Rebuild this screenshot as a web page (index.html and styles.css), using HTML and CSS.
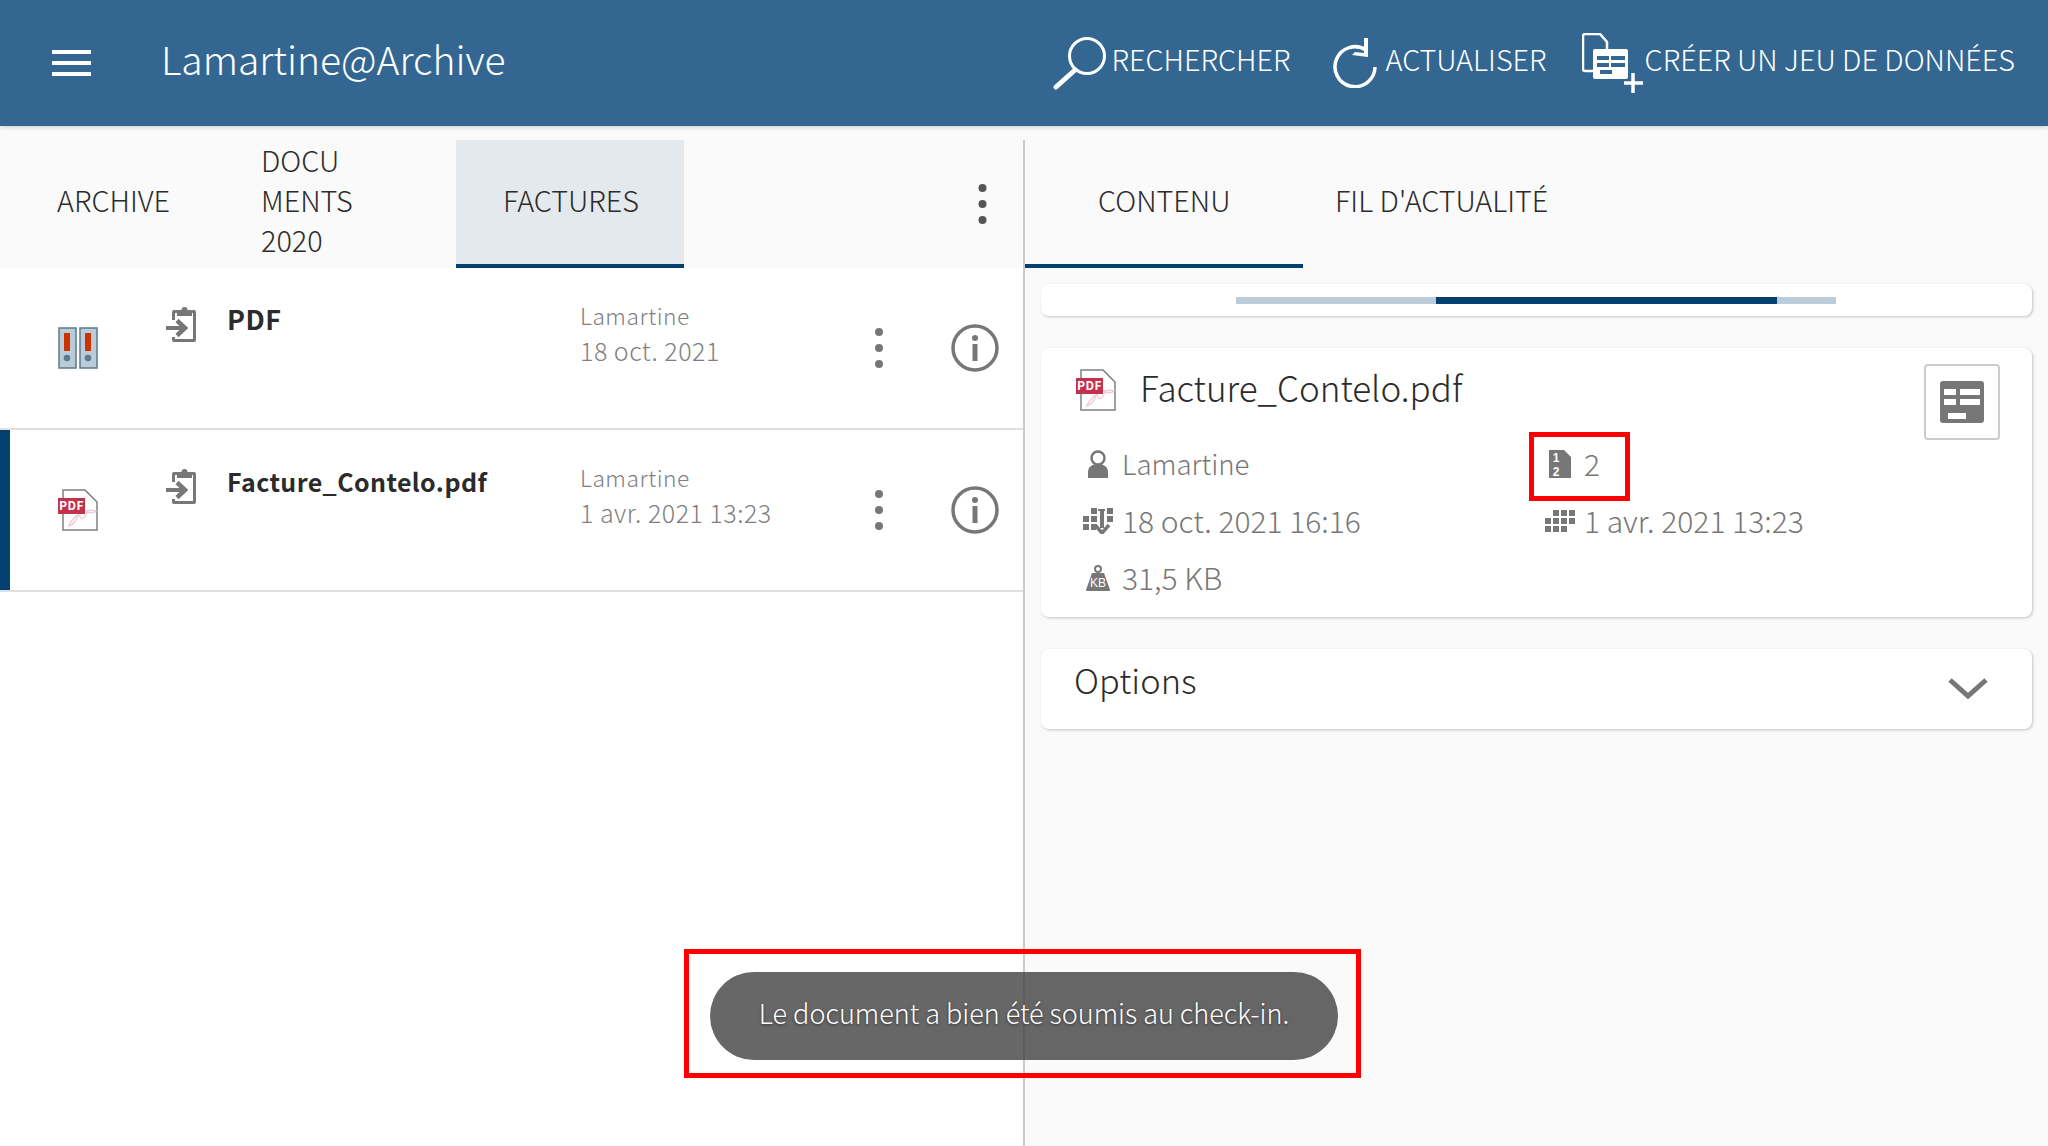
FILE: index.html
```html
<!DOCTYPE html>
<html lang="fr">
<head>
    <meta charset="UTF-8">
    <title>Lamartine@Archive</title>
    <link rel="stylesheet" href="styles.css">
</head>
<body>
    <svg class="sprite">
        <symbol id="i-clip" viewBox="0 0 30 36">
            <path fill-rule="evenodd" d="M8 4h20a2 2 0 0 1 2 2v28a2 2 0 0 1-2 2H8a2 2 0 0 1-2-2V6a2 2 0 0 1 2-2zM9 7v26h18V7z" fill="#777"/>
            <rect x="5" y="14" width="4" height="17" fill="#fff"/>
            <path d="M11 10V4h4.500a3 3 0 0 1 6 0H26v6z" fill="#777"/>
            <path d="M0 22h16" stroke="#777" stroke-width="4"/>
            <path d="M11 14.500l8 7.500-8 7.500" fill="none" stroke="#777" stroke-width="4.500"/>
        </symbol>
        <symbol id="i-pdf" viewBox="0 0 40 42">
            <path d="M5 1h22l12 12v28H5z" fill="#fff" stroke="#808080" stroke-width="1.500"/>
            <path d="M11 37c4-1 8-7 10-13 1 6 4 9 8-1 3 1 8 1 9-1-5-2-14 0-20 5-3 3-6 6-7 10z" fill="none" stroke="#eccfd4" stroke-width="1.500"/>
            <rect x="0" y="9" width="27" height="16" fill="#c4314d"/>
            <text x="13.500" y="21" class="pdf-label">PDF</text>
        </symbol>
        <symbol id="i-kebab" viewBox="0 0 8 40">
            <circle cx="4" cy="4" r="4"/><circle cx="4" cy="20" r="4"/><circle cx="4" cy="36" r="4"/>
        </symbol>
        <symbol id="i-info" viewBox="0 0 48 48">
            <circle cx="24" cy="24" r="22" fill="none" stroke="#777" stroke-width="3.500"/>
            <circle cx="24" cy="14" r="3" fill="#777"/>
            <rect x="21.500" y="20" width="5" height="17" fill="#777"/>
        </symbol>
    </svg>

    <header class="top-bar">
        <button class="burger"><span></span><span></span><span></span></button>
        <div class="app-title">Lamartine@Archive</div>
        <nav class="top-actions">
            <a class="top-action action-search">
                <svg width="55" height="54" viewBox="0 0 55 54"><circle cx="34" cy="20" r="17.500" fill="none" stroke="#fff" stroke-width="3"/><path d="M22 34 3 51" stroke="#fff" stroke-width="5" stroke-linecap="round"/></svg>
                <span>RECHERCHER</span>
            </a>
            <a class="top-action action-refresh">
                <svg width="44" height="50" viewBox="0 0 44 50"><path d="M33 12A20 20 0 1 0 42 29" fill="none" stroke="#fff" stroke-width="3.500"/><path d="M35 0v19l-16-2 3-3 9 1V0z" fill="#fff"/></svg>
                <span>ACTUALISER</span>
            </a>
            <a class="top-action action-create">
                <svg width="61" height="60" viewBox="0 0 61 60"><path d="M12 38H3a2 2 0 0 1-2-2V3a2 2 0 0 1 2-2h15l7 8v7" fill="none" stroke="#fff" stroke-width="2.500"/><rect x="11" y="16" width="35" height="30" rx="2" fill="#fff"/><path d="M15 23h12v4H15zM29 23h14v4H29zM15 30h12v4H15zM29 30h14v4H29zM18 37h12v4H18z" fill="#336791"/><path d="M51 40v20M42 50h19" stroke="#fff" stroke-width="3.500"/></svg>
                <span>CRÉER UN JEU DE DONNÉES</span>
            </a>
        </nav>
    </header>

    <main class="panes">
        <section class="left-pane">
            <div class="tabs">
                <div class="tab tab-archive">ARCHIVE</div>
                <div class="tab tab-docs">DOCU<br>MENTS<br>2020</div>
                <div class="tab tab-active">FACTURES</div>
                <svg class="tabs-more" width="9" height="40"><use href="#i-kebab"/></svg>
            </div>
            <div class="doc-list">
                <div class="doc-row">
                    <svg class="doc-type" width="40" height="42" viewBox="0 0 40 42">
                        <rect x="1" y="1" width="17" height="40" fill="#b9ccd8" stroke="#5e7a8c" stroke-width="1.500"/>
                        <rect x="22" y="1" width="17" height="40" fill="#b9ccd8" stroke="#5e7a8c" stroke-width="1.500"/>
                        <rect x="6" y="6" width="6" height="18" fill="#cc3300"/>
                        <rect x="27" y="6" width="6" height="18" fill="#cc3300"/>
                        <circle cx="9" cy="31" r="3.300" fill="#5e7a8c"/>
                        <circle cx="30" cy="31" r="3.300" fill="#5e7a8c"/>
                    </svg>
                    <svg class="doc-clip" width="30" height="36"><use href="#i-clip"/></svg>
                    <div class="doc-name doc-name-caps">PDF</div>
                    <div class="doc-meta"><div class="doc-author">Lamartine</div><div>18 oct. 2021</div></div>
                    <svg class="doc-more" width="8" height="40"><use href="#i-kebab"/></svg>
                    <svg class="doc-info" width="48" height="48"><use href="#i-info"/></svg>
                </div>
                <div class="doc-row doc-row-selected">
                    <svg class="doc-type" width="40" height="42"><use href="#i-pdf"/></svg>
                    <svg class="doc-clip" width="30" height="36"><use href="#i-clip"/></svg>
                    <div class="doc-name">Facture_Contelo.pdf</div>
                    <div class="doc-meta"><div class="doc-author">Lamartine</div><div>1 avr. 2021 13:23</div></div>
                    <svg class="doc-more" width="8" height="40"><use href="#i-kebab"/></svg>
                    <svg class="doc-info" width="48" height="48"><use href="#i-info"/></svg>
                </div>
            </div>
        </section>

        <section class="right-pane">
            <div class="tabs right-tabs">
                <div class="tab tab-content">CONTENU</div>
                <div class="tab tab-feed">FIL D'ACTUALITÉ</div>
            </div>
            <div class="cards">
                <div class="card pager-card">
                    <div class="pager"><div class="pager-thumb"></div></div>
                </div>
                <div class="card detail-card">
                    <div class="detail-head">
                        <svg width="40" height="42"><use href="#i-pdf"/></svg>
                        <div class="detail-title">Facture_Contelo.pdf</div>
                        <button class="form-btn">
                            <svg width="44" height="42" viewBox="0 0 44 42"><rect width="44" height="42" rx="3" fill="#777"/><path d="M4 8h12v6H4zM20 8h20v6H20zM4 18h12v6H4zM20 18h20v6H20zM8 32h18v6H8z" fill="#fff"/></svg>
                        </button>
                    </div>
                    <div class="detail-grid">
                        <div class="fact">
                            <span class="fact-icon"><svg width="20" height="28" viewBox="0 0 20 28"><circle cx="10" cy="8" r="6.500" fill="none" stroke="#777" stroke-width="2.500"/><path d="M0 28v-6c0-5 4-8 10-8s10 3 10 8v6z" fill="#777"/></svg></span>
                            <span class="fact-author">Lamartine</span>
                        </div>
                        <div class="fact">
                            <span class="fact-icon"><svg width="22" height="28" viewBox="0 0 22 28"><path d="M0 0h15l7 7v21H0z" fill="#777"/><text x="7" y="12" class="num-label">1</text><text x="7" y="26" class="num-label">2</text></svg></span>
                            <span>2</span>
                        </div>
                        <div class="fact">
                            <span class="fact-icon"><svg width="30" height="26" viewBox="0 0 30 26"><path d="M8 0h6v6H8zM0 8h6v6H0zM8 8h6v6H8zM0 16h6v6H0zM8 16h5v6H8zM24 0h6v6h-6zM24 8h6v6h-6zM15 1h7v2h-7z" fill="#777"/><path d="M19 3v17" stroke="#777" stroke-width="4"/><path d="M12 17l7 8 7-8" fill="none" stroke="#777" stroke-width="3.500"/></svg></span>
                            <span>18 oct. 2021 16:16</span>
                        </div>
                        <div class="fact">
                            <span class="fact-icon"><svg width="30" height="22" viewBox="0 0 30 22"><path d="M8 0h6v6H8zM16 0h6v6h-6zM24 0h6v6h-6zM8 8h6v6H8zM16 8h6v6h-6zM24 8h6v6h-6zM0 8h6v6H0zM0 16h6v6H0zM8 16h6v6H8zM16 16h6v6h-6z" fill="#777"/></svg></span>
                            <span>1 avr. 2021 13:23</span>
                        </div>
                        <div class="fact">
                            <span class="fact-icon"><svg width="24" height="26" viewBox="0 0 24 26"><circle cx="12" cy="4" r="3" fill="none" stroke="#777" stroke-width="2"/><path d="M6 8h12l6 17a1 1 0 0 1-1 1H1a1 1 0 0 1-1-1z" fill="#777"/><text x="12" y="22" class="kb-label">KB</text></svg></span>
                            <span>31,5 KB</span>
                        </div>
                    </div>
                </div>
                <div class="card options-card">
                    <div class="options-title">Options</div>
                    <svg width="40" height="21" viewBox="0 0 40 21"><path d="M2 2l18 16L38 2" fill="none" stroke="#777" stroke-width="5"/></svg>
                </div>
            </div>
        </section>
    </main>

    <div class="toast">Le document a bien été soumis au check-in.</div>
    <div class="mark mark-pages"></div>
    <div class="mark mark-toast"></div>
</body>
</html>
```

FILE: styles.css
```css
* {
    box-sizing: border-box;
}
html, body {
    height: 100%;
}
body {
    margin: 0;
    overflow: hidden;
    background: #fafafa;
    color: #2b2b2b;
    font-family: "Noto Sans CJK SC", "Noto Sans", sans-serif;
    font-weight: 300;
}
.sprite {
    display: none;
}
.pdf-label {
    font-size: 12px;
    font-weight: 700;
    fill: #fff;
    text-anchor: middle;
    letter-spacing: 0.5px;
}
.num-label {
    font-family: "Liberation Sans", sans-serif;
    font-size: 12px;
    font-weight: 700;
    fill: #fff;
    text-anchor: middle;
}
.kb-label {
    font-family: "Liberation Sans", sans-serif;
    font-size: 12px;
    fill: #fff;
    text-anchor: middle;
}

/* header */
.top-bar {
    display: flex;
    align-items: center;
    height: 126px;
    padding-left: 52px;
    background: #336791;
    color: #fff;
    box-shadow: 0 1px 5px rgba(0, 0, 0, 0.2);
    position: relative;
}
.burger {
    display: flex;
    flex-direction: column;
    gap: 7px;
    width: 39px;
    padding: 0;
    border: none;
    background: none;
}
.burger span {
    display: block;
    height: 4px;
    background: #fff;
}
.app-title {
    margin-left: 70px;
    margin-bottom: 10px;
    font-size: 39px;
    line-height: 50px;
}
.top-actions {
    display: flex;
    align-items: center;
    margin-left: auto;
    padding-right: 33px;
    font-size: 28.800px;
}
.top-action {
    display: flex;
    align-items: center;
    white-space: nowrap;
}
.top-action span {
    margin-bottom: 10px;
}
.action-search svg {
    margin-right: 3px;
}
.action-refresh {
    margin-left: 42px;
}
.action-refresh svg {
    margin-right: 9px;
}
.action-create {
    margin-left: 35px;
}
.action-create svg {
    margin-right: 2px;
}

/* panes */
.panes {
    display: grid;
    grid-template-columns: 1023px 1fr;
    height: 1006px;
    margin-top: 14px;
}
.left-pane {
    display: flex;
    flex-direction: column;
}
.right-pane {
    border-left: 2px solid #ccc;
}

/* tabs */
.tabs {
    display: flex;
    align-items: stretch;
    height: 128px;
    font-size: 28.800px;
    line-height: 40px;
    position: relative;
}
.tab {
    display: flex;
    align-items: center;
    padding: 0 47px 5px;
    border-bottom: 4px solid transparent;
}
.tab-archive {
    width: 214px;
    padding-left: 57px;
    padding-right: 0;
}
.tab-docs {
    width: 242px;
}
.tab-active {
    width: 228px;
    background: #e4e9ed;
    border-bottom-color: #01406f;
}
.tabs-more {
    position: absolute;
    top: 44px;
    left: 978px;
    fill: #555;
}
.tab-content {
    width: 278px;
    padding: 0 0 5px 73px;
    border-bottom-color: #01406f;
}
.tab-feed {
    padding: 0 0 5px 32px;
}

/* list */
.doc-list {
    flex: 1;
    background: #fff;
}
.doc-row {
    display: grid;
    grid-template-columns: 108px 61px 353px 295px 76px 48px;
    height: 162px;
    padding-left: 58px;
    border-bottom: 2px solid #e0e0e0;
}
.doc-row-selected {
    box-shadow: inset 10px 0 0 #01406f;
}
.doc-type {
    align-self: center;
}
.doc-clip {
    margin-top: 38px;
}
.doc-name {
    margin-top: 33px;
    font-size: 25px;
    line-height: 36px;
    font-weight: 700;
    letter-spacing: 0.4px;
}
.doc-name-caps {
    font-size: 27px;
    letter-spacing: 0.5px;
}
.doc-meta {
    margin-top: 30px;
    font-size: 25px;
    line-height: 35px;
    letter-spacing: 0.5px;
    color: #808080;
}
.doc-author {
    font-size: 22.800px;
}
.doc-more {
    align-self: center;
    fill: #777;
}
.doc-info {
    align-self: center;
}

/* cards */
.cards {
    display: flex;
    flex-direction: column;
    padding: 16px 16px 0 16px;
}
.card {
    background: #fff;
    border-radius: 8px;
    box-shadow: 1px 1px 3px rgba(0, 0, 0, 0.22);
}
.pager-card {
    height: 32px;
    padding: 13px 196px 0 195px;
}
.pager {
    height: 7px;
    padding-left: 200px;
    background: #bccbd9;
}
.pager-thumb {
    width: 341px;
    height: 7px;
    background: #01406f;
}
.detail-card {
    height: 269px;
    margin-top: 32px;
    padding: 16px 32px 0 35px;
}
.detail-head {
    display: flex;
    align-items: flex-start;
}
.detail-head svg {
    margin-top: 5px;
}
.detail-title {
    margin-left: 24px;
    margin-top: 1px;
    font-size: 35px;
    line-height: 44px;
}
.form-btn {
    display: flex;
    align-items: center;
    justify-content: center;
    width: 76px;
    height: 76px;
    margin-left: auto;
    padding: 0;
    background: #fff;
    border: 2px solid #ccc;
    border-radius: 4px;
}
.detail-head .form-btn svg {
    margin: 0;
}
.detail-grid {
    display: grid;
    grid-template-columns: 462px 1fr;
    grid-auto-rows: 57px;
    margin: -5px 0 0 -2px;
    font-size: 30px;
    color: #777;
}
.fact {
    display: flex;
    align-items: center;
}
.fact span:last-child {
    margin-bottom: 1px;
}
.fact-icon {
    display: flex;
    justify-content: center;
    width: 47px;
    margin-right: 1px;
}
.fact-author {
    font-size: 27.600px;
}
.options-card {
    display: flex;
    align-items: center;
    justify-content: space-between;
    height: 80px;
    margin-top: 32px;
    padding: 0 44px 0 33px;
}
.options-title {
    font-size: 34.400px;
    line-height: 44px;
    margin-top: -20px;
}
.options-card svg {
    margin-top: -2px;
}

/* overlays */
.toast {
    position: absolute;
    left: 710px;
    top: 972px;
    width: 628px;
    height: 88px;
    border-radius: 44px;
    background: rgba(70, 70, 70, 0.82);
    color: #fff;
    font-size: 27px;
    line-height: 82px;
    text-align: center;
    text-shadow: 0 1px 3px rgba(0, 0, 0, 0.5);
}
.mark {
    position: absolute;
    border: 5px solid #f00;
}
.mark-pages {
    left: 1529px;
    top: 432px;
    width: 101px;
    height: 69px;
}
.mark-toast {
    left: 684px;
    top: 949px;
    width: 677px;
    height: 129px;
}
```
